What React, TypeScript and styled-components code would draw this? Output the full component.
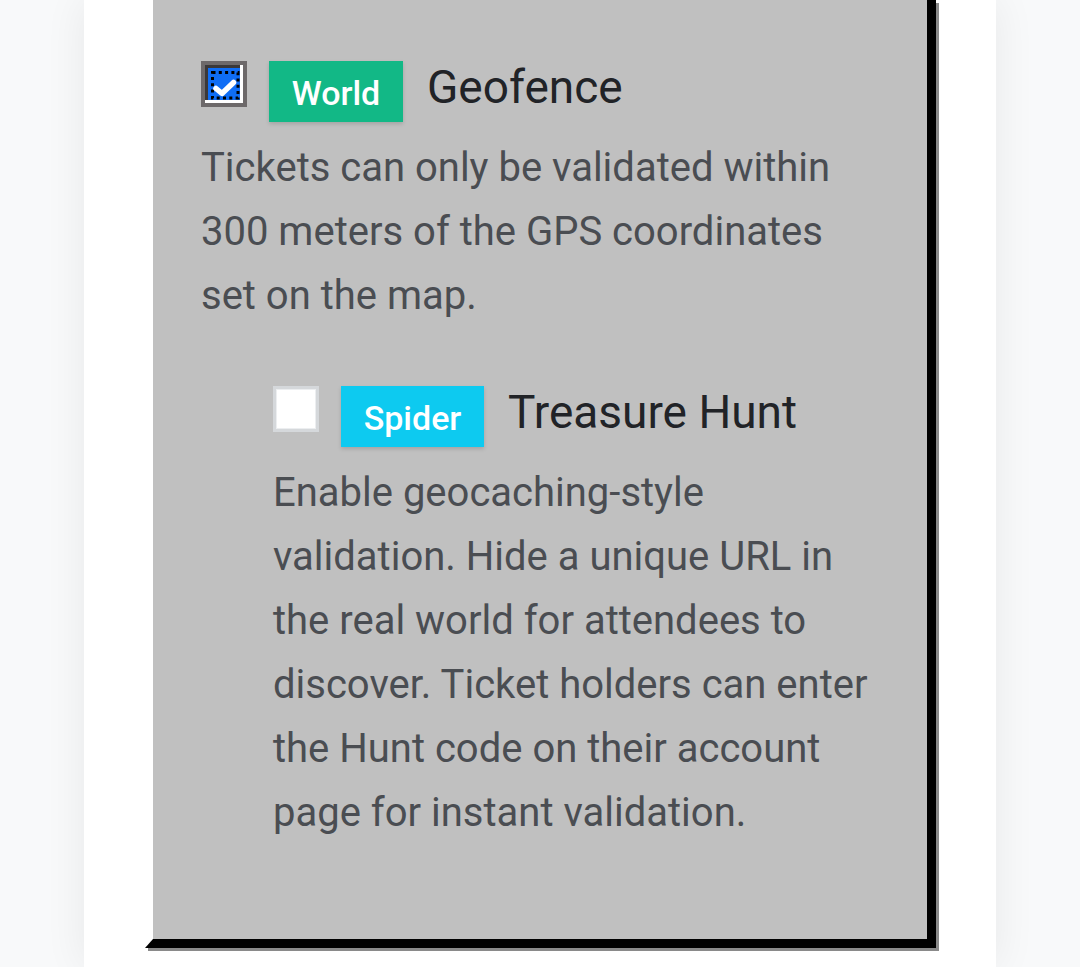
import React from "react";
import styled, { createGlobalStyle } from "styled-components";

const Global = createGlobalStyle`
  html, body { margin: 0; padding: 0; }
  body {
    background: #f8f9fa;
    font-family: Roboto, "Noto Sans", Arial, sans-serif;
    overflow: hidden;
  }
`;

const Column = styled.div`
  width: 912px;
  min-height: 967px;
  margin: 0 auto;
  background: #ffffff;
  box-shadow: 0 0 40px rgba(0, 0, 0, 0.07);
  padding-left: 61px;
  box-sizing: border-box;
`;

const Panel = styled.div`
  width: 791px;
  box-sizing: border-box;
  background: #c0c0c0;
  background-clip: padding-box;
  border-left: 8px solid transparent;
  border-right: 9px solid #000;
  border-bottom: 9px solid #000;
  box-shadow: 3px 3px 0 #8a8a8a;
  padding: 61px 48px 94px 48px;
`;

const Option = styled.div<{ $nested?: boolean }>`
  margin-left: ${(p) => (p.$nested ? "72px" : "0")};
  margin-top: ${(p) => (p.$nested ? "58px" : "0")};
`;

const Row = styled.div`
  display: flex;
  align-items: flex-start;
`;

const BoxBase = styled.span`
  display: block;
  flex: none;
  width: 46px;
  height: 46px;
  box-sizing: border-box;
  margin-right: 22px;
`;

const CheckedBox = styled(BoxBase)`
  border: 4px solid #6d696a;
  background: #fff;
`;

const EmptyBox = styled(BoxBase)`
  border: 3px solid #d5d8db;
  box-shadow: inset 0 0 0 1px #eceef0;
  background: #fff;
`;

const Badge = styled.span<{ $color: string; $w: number }>`
  display: inline-flex;
  align-items: center;
  justify-content: center;
  flex: none;
  width: ${(p) => p.$w}px;
  height: 61px;
  background: ${(p) => p.$color};
  color: #fff;
  font-size: 34px;
  font-weight: 500;
  box-shadow: 0 2px 4px rgba(0, 0, 0, 0.15);
  margin-right: 25px;
  padding-top: 3px;
  box-sizing: border-box;
`;

const Title = styled.span`
  font-size: 46px;
  color: #212327;
  line-height: 52px;
  margin-left: -1px;
  white-space: nowrap;
`;

const Desc = styled.p`
  margin: 14px 0 0 0;
  font-size: 40px;
  line-height: 64px;
  color: #4a4d52;
`;

function CheckIcon() {
  return (
    <svg width="38" height="38" viewBox="0 0 38 38" style={{ display: "block" }}>
      <rect x="0" y="0" width="38" height="38" fill="#fff" />
      <rect x="0" y="0" width="35" height="35" fill="#3a3839" />
      <rect x="3" y="3" width="32" height="32" fill="#0f6df5" />
      <rect
        x="7.5"
        y="7.5"
        width="25.5"
        height="25.5"
        fill="none"
        stroke="#000"
        strokeWidth="3"
        strokeDasharray="3 3.3"
      />
      <path
        d="M11 23.5 L17 28.5 L28.5 17.5"
        fill="none"
        stroke="#fff"
        strokeWidth="5.5"
        strokeLinecap="round"
        strokeLinejoin="round"
      />
    </svg>
  );
}

export default function App() {
  return (
    <>
      <Global />
      <Column>
        <Panel>
          <Option>
            <Row>
              <CheckedBox>
                <CheckIcon />
              </CheckedBox>
              <Badge $color="#12b886" $w={134}>World</Badge>
              <Title>Geofence</Title>
            </Row>
            <Desc>
              Tickets can only be validated within 300 meters of the GPS coordinates set on the map.
            </Desc>
          </Option>
          <Option $nested>
            <Row>
              <EmptyBox />
              <Badge $color="#0dcaf0" $w={143}>Spider</Badge>
              <Title>Treasure Hunt</Title>
            </Row>
            <Desc>
              Enable geocaching-style validation. Hide a unique URL in the real world for attendees
              to discover. Ticket holders can enter the Hunt code on their account page for instant
              validation.
            </Desc>
          </Option>
        </Panel>
      </Column>
    </>
  );
}
